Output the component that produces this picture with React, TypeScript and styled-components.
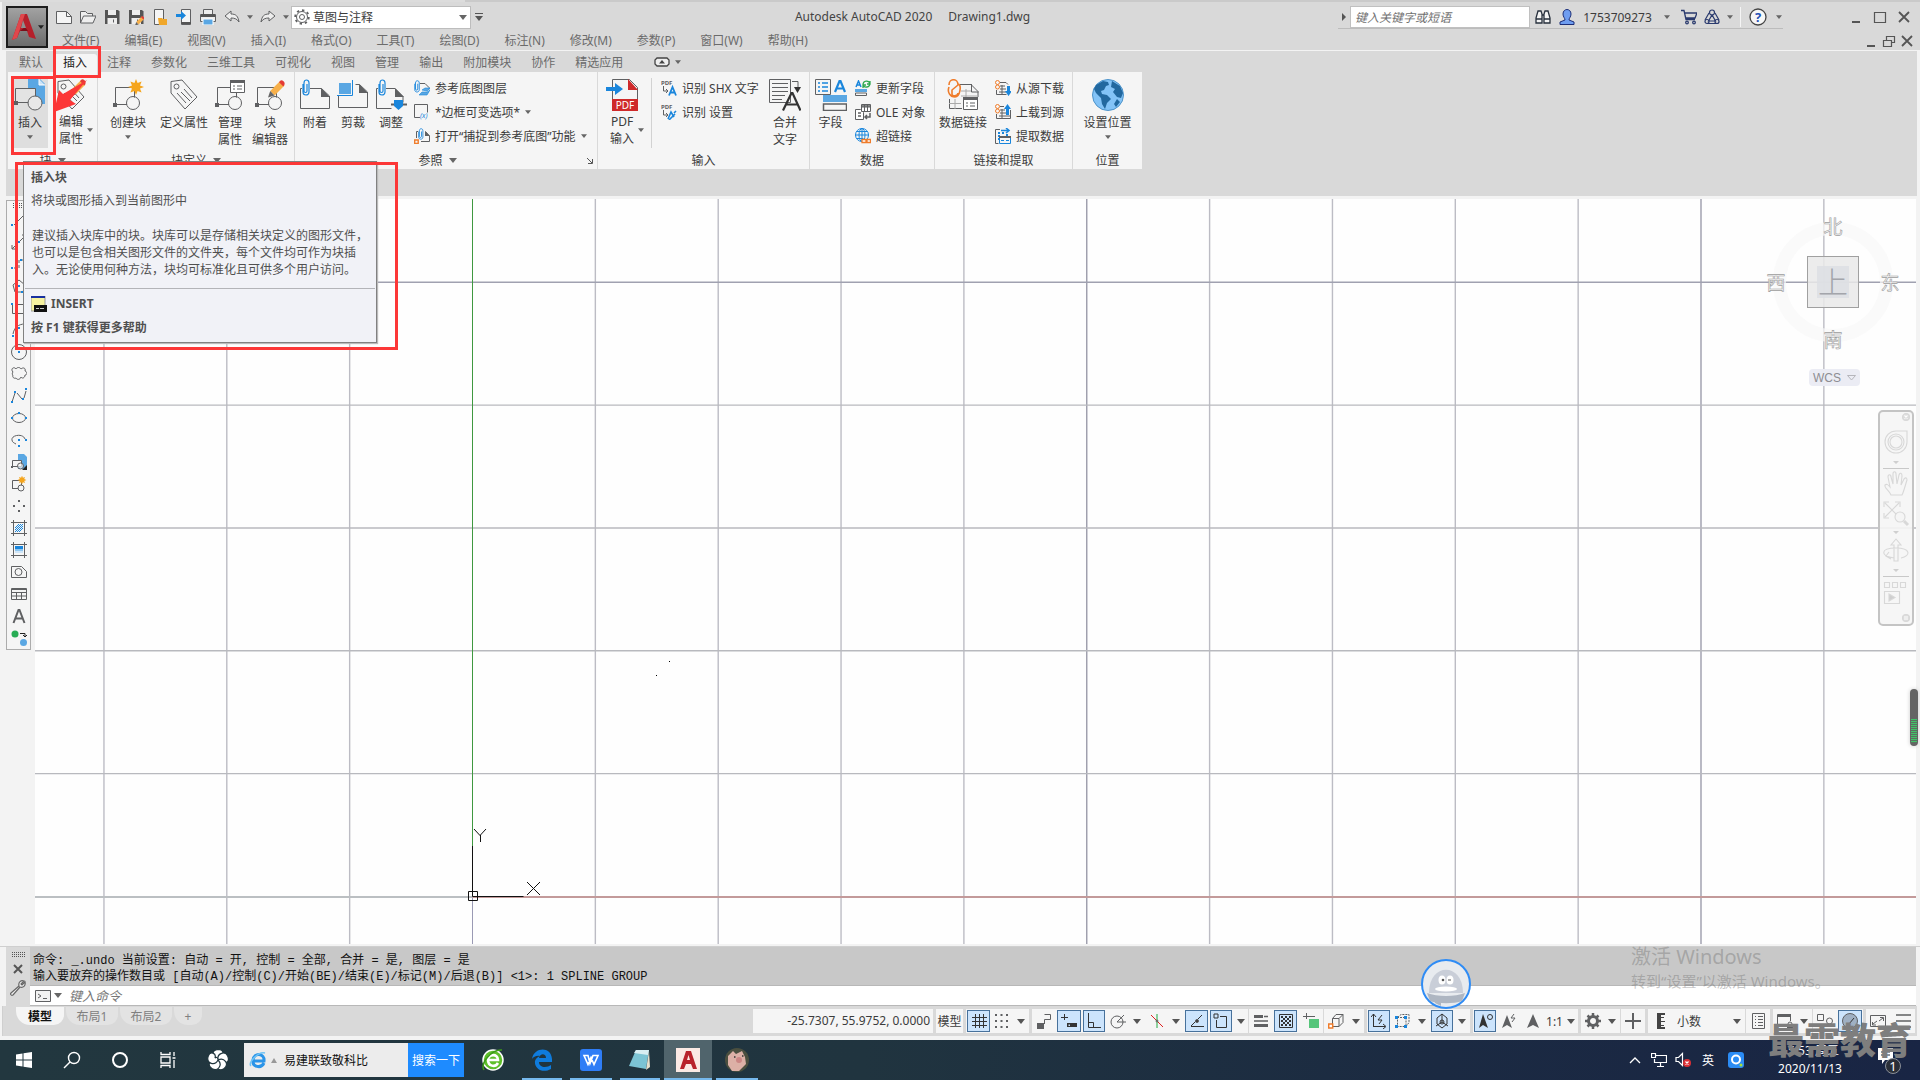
import React from "react";
import styled, { createGlobalStyle, css } from "styled-components";

/* ---------- theme values ---------- */
const chrome = "#d9d9d9";
const panel = "#f5f5f5";
const ink = "#3c3c3c";
const muted = "#6b6b6b";
const line = "#5f6062";
const blue = "#1a86dc";
const mark = "#fc3737";

const GlobalStyle = createGlobalStyle`
  *, *::before, *::after { box-sizing: border-box; }
  body { margin: 0; overflow: hidden; }
  body, button, input, select {
    font-family: "Noto Sans", "Noto Sans CJK SC", sans-serif;
    font-size: 12px;
    color: ${ink};
  }
  button, input, select { margin: 0; padding: 0; border: 0; background: none; outline: none; }
  svg { display: block; flex: none; }
`;

/* ---------- shell ---------- */
const Shell = styled.div`
  display: flex;
  flex-direction: column;
  height: 100vh;
  background: #f3f3f3;
  position: relative;
`;
const TopStrip = styled.div`
  height: 2px;
  flex: none;
  background: linear-gradient(90deg, #dcdcdc 465px, #cacaca 465px);
`;
const Header = styled.header`
  display: flex;
  flex: none;
  height: 48px;
  margin-left: 2px;
  padding: 0 4px;
  background: ${chrome};
`;
const AppButton = styled.button`
  width: 42px;
  height: 42px;
  margin-top: 4px;
  border: 2px solid #1c1c1c;
  background: linear-gradient(#a2a2a2, #6c6c6c);
  display: flex;
  align-items: center;
  justify-content: center;
`;
const HeaderRows = styled.div`
  flex: 1;
  display: flex;
  flex-direction: column;
`;
const TitleRow = styled.div`
  display: flex;
  align-items: flex-start;
  height: 30px;
  padding-top: 4px;
`;
const QuickBar = styled.div`
  display: flex;
  align-items: center;
  height: 22px;
  padding-left: 4px;
`;
const QuickButton = styled.button<{ $w?: number }>`
  width: ${(p) => p.$w ?? 24}px;
  height: 22px;
  display: flex;
  align-items: center;
  justify-content: center;
`;
const Workspace = styled.label`
  display: flex;
  align-items: center;
  width: 180px;
  height: 23px;
  margin-left: -1px;
  padding: 0 3px 0 2px;
  background: #fff;
  border: 1px solid #bdbdbd;
`;
const PlainSelect = styled.select`
  appearance: none;
  flex: 1;
  min-width: 0;
  padding-left: 3px;
`;
const Title = styled.h1`
  flex: 1;
  display: flex;
  justify-content: center;
  gap: 16px;
  margin: 0;
  font-size: 12px;
  line-height: 22px;
  font-weight: 400;
  color: #444;
`;
const InfoCenter = styled.div`
  display: flex;
  align-items: center;
  height: 23px;
  padding-left: 4px;
  border-bottom: 1px solid #bcbcbc;
`;
const SearchInput = styled.input`
  width: 180px;
  height: 22px;
  margin: 0 1px 0 4px;
  padding: 0 4px;
  background: #fff;
  border: 1px solid #c0c0c0;
  font-style: italic;
  &::placeholder { color: #707070; opacity: 1; }
`;
const Divider = styled.span`
  width: 1px;
  height: 20px;
  margin: 0 0 0 4px;
  background: #f5f5f5;
`;
const WindowControls = styled.div`
  display: flex;
  align-items: center;
  height: 22px;
  padding-left: 61px;
`;
const MenuRow = styled.nav`
  display: flex;
  align-items: center;
  height: 18px;
  padding-left: 13px;
`;
const MenuButton = styled.button`
  padding: 0 1px;
  margin-right: 23px;
  line-height: 18px;
  color: ${muted};
`;
const DocControls = styled.div`
  display: flex;
  margin-left: auto;
`;
const DocButton = styled.button`
  width: 18px;
  height: 18px;
  display: flex;
  align-items: center;
  justify-content: center;
`;

/* ---------- ribbon ---------- */
const Ribbon = styled.section`
  flex: none;
  margin: 1px 3px 0 6px;
  background: ${chrome};
  padding: 0 2px 27px;
`;
const TabRow = styled.div`
  display: flex;
  align-items: flex-end;
  height: 21px;
  padding-left: 1px;
`;
const Tab = styled.button<{ $on?: boolean }>`
  height: 18px;
  padding: 0 10px;
  line-height: 18px;
  color: ${(p) => (p.$on ? "#222" : muted)};
  background: ${(p) => (p.$on ? panel : "transparent")};
  border-radius: 3px 3px 0 0;
`;
const TabToggle = styled.button`
  display: flex;
  align-items: center;
  gap: 5px;
  height: 20px;
  padding-left: 21px;
`;
const Panels = styled.div`
  display: flex;
  height: 97px;
`;
const Panel = styled.section<{ $w: number }>`
  display: flex;
  flex-direction: column;
  width: ${(p) => p.$w}px;
  background: ${panel};
  & + & { border-left: 1px solid ${chrome}; }
`;
const PanelBody = styled.div<{ $pad?: number }>`
  display: flex;
  align-items: flex-start;
  flex: 1;
  padding: 6px 0 0 ${(p) => p.$pad ?? 0}px;
`;
const PanelTitle = styled.footer`
  display: flex;
  align-items: center;
  justify-content: center;
  gap: 6px;
  height: 18px;
`;
const Launcher = styled.button`
  margin-left: auto;
  padding-right: 4px;
`;
const PanelName = styled.span`
  display: flex;
  align-items: center;
  gap: 6px;
  margin-left: auto;
`;
const BigButton = styled.button<{ $w: number; $hot?: boolean; $left?: boolean; $after?: number }>`
  display: flex;
  flex-direction: column;
  align-items: ${(p) => (p.$left ? "flex-start" : "center")};
  width: ${(p) => p.$w}px;
  height: 70px;
  margin-right: ${(p) => p.$after ?? 0}px;
  padding-top: 1px;
  line-height: 17px;
  white-space: nowrap;
  background: ${(p) => (p.$hot ? "#dedede" : "transparent")};
  & > svg:last-child:not(:first-child) { margin-top: 4px; }
`;
const BigLabel = styled.span`
  display: flex;
  align-items: center;
  gap: 4px;
  padding: 0 4px;
  margin: 3px -8px 0;
  white-space: pre;
  text-align: center;
`;
const SideLabel = styled(BigLabel)`
  margin: 2px 0 0;
`;
const SmallColumn = styled.div<{ $w?: number }>`
  display: flex;
  flex-direction: column;
  padding-left: 4px;
  width: ${(p) => (p.$w ? p.$w + "px" : "auto")};
`;
const SmallButton = styled.button`
  display: flex;
  align-items: center;
  gap: 5px;
  height: 24px;
  padding-bottom: 4px;
  white-space: nowrap;
`;
const PanelRule = styled.span`
  width: 1px;
  height: 70px;
  margin: 0 5px 0 3px;
  background: #d2d2d2;
`;

/* ---------- drawing area ---------- */
const Work = styled.main`
  flex: 1;
  min-height: 0;
  display: flex;
  padding: 3px 4px 2px 6px;
  border-bottom: 1px solid #cfcfcf;
`;
const ToolPalette = styled.div`
  display: flex;
  flex-direction: column;
  align-items: center;
  align-self: flex-start;
  width: 25px;
  margin: 1px 4px 0 0;
  padding-top: 2px;
  border: 1px solid #acacac;
  background: ${panel};
`;
const ToolButton = styled.button`
  width: 22px;
  height: 22px;
  display: flex;
  align-items: center;
  justify-content: center;
`;
const Grip = styled.span`
  width: 14px;
  height: 6px;
  background: conic-gradient(from 90deg at 1px 1px, transparent 270deg, #555 0) 0 0 / 2px 2px;
`;
const Canvas = styled.div`
  position: relative;
  flex: 1;
  overflow: hidden;
  background: #fefefe;
`;
const Drawing = styled.svg`
  position: absolute;
  left: 0;
  top: 0;
`;
const Compass = styled.div`
  position: absolute;
  top: 12px;
  right: 14px;
  width: 138px;
  height: 180px;
`;
const WcsButton = styled.button`
  position: absolute;
  left: 45px;
  top: 158px;
  display: flex;
  align-items: center;
  gap: 6px;
  height: 17px;
  padding: 0 4px;
  border-radius: 4px;
  background: #ebecf4;
  color: #8d8d92;
  font-family: "Liberation Sans", sans-serif;
`;
const NavBar = styled.div`
  position: absolute;
  top: 211px;
  right: 2px;
  width: 36px;
  height: 216px;
  border: 2px solid #c4c4c4;
  border-radius: 5px;
  background: rgba(245, 245, 245, 0.9);
`;
const Gauge = styled.div`
  position: absolute;
  top: 689px;
  right: 2px;
  width: 8px;
  height: 57px;
  padding: 30px 1px 3px;
  border-radius: 4px;
  background: #646464;
  box-shadow: 0 0 4px #ccc;
  &::before {
    content: "";
    display: block;
    height: 24px;
    background: repeating-linear-gradient(#41c368 0 1px, #5a6f60 1px 2px);
  }
`;

/* ---------- command line ---------- */
const Command = styled.section`
  flex: none;
  display: flex;
  margin: 0 4px 0 6px;
  background: ${chrome};
`;
const CommandTools = styled.div`
  display: flex;
  flex-direction: column;
  align-items: center;
  width: 24px;
  padding-top: 5px;
  gap: 6px;
`;
const CommandBody = styled.div`
  flex: 1;
`;
const History = styled.pre`
  margin: 0;
  height: 38px;
  padding: 6px 3px 0;
  line-height: 16px;
  font-family: "Liberation Mono", "Noto Sans CJK SC", monospace;
  font-size: 12px;
  color: #111;
  background: #c8c8c8;
`;
const Prompt = styled.label`
  display: flex;
  align-items: center;
  gap: 3px;
  height: 21px;
  padding-left: 5px;
  background: #fff;
  border-top: 1px solid #b8b8b8;
  border-bottom: 1px solid #b8b8b8;
`;
const PromptInput = styled.input`
  flex: 1;
  padding-left: 4px;
  font-size: 13px;
  font-style: italic;
  &::placeholder { color: #777; opacity: 1; }
`;

/* ---------- layout tabs and status ---------- */
const Bottom = styled.footer`
  flex: none;
  display: flex;
  height: 30px;
  margin: 0 3px 0 2px;
  padding: 1px 2px 0 10px;
  background: ${chrome};
  border-left: 1px solid #cfcfcf;
`;
const LayoutTabs = styled.div`
  display: flex;
  padding-left: 3px;
`;
const LayoutTab = styled.button<{ $on?: boolean; $w?: number }>`
  width: ${(p) => p.$w ?? 48}px;
  height: 18px;
  margin-right: 2px;
  line-height: 17px;
  border-radius: 0 0 10px 14px;
  background: ${(p) => (p.$on ? panel : "#e3e3e3")};
  color: ${(p) => (p.$on ? "#111" : "#808080")};
  font-weight: ${(p) => (p.$on ? 700 : 400)};
`;
const Status = styled.div`
  display: flex;
  gap: 3px;
  height: 24px;
  margin: 2px 0 0 auto;
`;
const StatusGroup = styled.div`
  display: flex;
  align-items: center;
  background: ${panel};
`;
const StatusButton = styled.button<{ $w: number; $on?: boolean; $sep?: boolean }>`
  display: flex;
  align-items: center;
  justify-content: center;
  width: ${(p) => (p.$on ? p.$w - 2 : p.$w)}px;
  height: ${(p) => (p.$on ? 22 : 24)}px;
  margin: ${(p) => (p.$on ? "0 1px" : "0")};
  white-space: nowrap;
  ${(p) => p.$on && css`background: #cce4fc; border: 1px solid #47719b;`}
  ${(p) => p.$sep && css`border-left: 1px solid ${chrome};`}
`;
const Coordinates = styled.output`
  width: 180px;
  padding-right: 3px;
  text-align: right;
  line-height: 24px;
`;
const UnitSelect = styled.label`
  display: flex;
  align-items: center;
  width: 73px;
  padding: 0 4px 0 2px;
`;

/* ---------- taskbar ---------- */
const Taskbar = styled.footer`
  flex: none;
  display: flex;
  align-items: center;
  height: 40px;
  margin-top: 4px;
  color: #fff;
  background: linear-gradient(90deg, #22373f 0, #20343f 45%, #1b2a42 75%, #192544 100%);
`;
const TaskButton = styled.button<{ $w: number; $run?: boolean; $on?: boolean }>`
  position: relative;
  display: flex;
  align-items: center;
  justify-content: center;
  width: ${(p) => p.$w}px;
  height: 40px;
  color: #fff;
  background: ${(p) => (p.$on ? "#50646c" : "transparent")};
  ${(p) => p.$run && css`
    &::after {
      content: "";
      position: absolute;
      left: ${p.$on ? 0 : 4}px;
      right: ${p.$on ? 0 : 4}px;
      bottom: 0;
      height: 2px;
      background: #76b9ed;
    }
  `}
`;
const WebSearch = styled.form`
  display: flex;
  height: 34px;
  width: 220px;
  margin-right: 4px;
`;
const WebLabel = styled.label`
  display: flex;
  align-items: center;
  flex: 1;
  gap: 4px;
  padding-left: 5px;
  background: #ececec;
`;
const WebInput = styled.input`
  width: 110px;
  padding-left: 3px;
  color: #111;
`;
const WebButton = styled.button`
  width: 56px;
  background: #1e8bff;
  color: #fff;
`;
const Tray = styled.div`
  display: flex;
  align-items: center;
  margin-left: auto;
`;
const Clock = styled.time`
  width: 88px;
  margin-left: 16px;
  text-align: center;
  line-height: 18px;
  white-space: pre-line;
`;

/* ---------- floating layers ---------- */
const Tooltip = styled.aside`
  position: absolute;
  left: 23px;
  top: 161px;
  width: 354px;
  height: 182px;
  display: flex;
  flex-direction: column;
  border: 1px solid #818181;
  background: #f1f2f7;
  padding: 7px 1px 0;
  color: #505050;
  box-shadow: 1px 1px 1px #bbb;
  line-height: 17px;
`;
const TipTitle = styled.h2`
  margin: 0 0 6px;
  padding: 0 6px;
  font-size: 12px;
  font-weight: 700;
`;
const TipLead = styled.p`
  margin: 0 0 18px;
  padding: 0 6px;
`;
const TipBody = styled.p`
  margin: 0 0 10px;
  padding: 0 7px;
`;
const TipCommand = styled.p`
  display: flex;
  align-items: center;
  gap: 4px;
  margin: 0 0 7px;
  padding: 6px 6px 0;
  border-top: 1px solid #b3b4b8;
  font-weight: 700;
`;
const Frame = styled.div<{ $x: number; $y: number; $w: number; $h: number }>`
  position: absolute;
  left: ${(p) => p.$x}px;
  top: ${(p) => p.$y}px;
  width: ${(p) => p.$w}px;
  height: ${(p) => p.$h}px;
  border: 3px solid ${mark};
  pointer-events: none;
`;
const Pointer = styled.svg`
  position: absolute;
  left: 53px;
  top: 78px;
`;
const Mascot = styled.svg`
  position: absolute;
  right: 449px;
  bottom: 71px;
`;
const Activation = styled.div`
  position: absolute;
  left: calc(100% - 289px);
  bottom: 88px;
  color: rgba(110, 110, 110, 0.4);
  font-size: 15px;
  line-height: 22px;
  white-space: nowrap;
  pointer-events: none;
`;
const ActivationTitle = styled.div`
  font-size: 20px;
  line-height: 27px;
`;
const Watermark = styled.div`
  position: absolute;
  right: 8px;
  bottom: 24px;
  font-family: "Noto Sans CJK SC", sans-serif;
  font-size: 36px;
  line-height: 36px;
  font-weight: 900;
  color: #7e7e7e;
  pointer-events: none;
`;

/* ---------- icons ---------- */
type IconProps = { s?: number; w?: number; h?: number; children: React.ReactNode; c?: string; sw?: number };
const Ic = ({ s = 16, w, h, children, c = line, sw = 1 }: IconProps) => (
  <svg width={w ?? s} height={h ?? s} viewBox={`0 0 ${w ?? s} ${h ?? s}`} fill="none" stroke={c} strokeWidth={sw}>
    {children}
  </svg>
);
const Caret = ({ c = "#666", big = false }: { c?: string; big?: boolean }) => (
  <svg width={big ? 8 : 6} height={big ? 5 : 4} viewBox="0 0 8 5"><path d="M0 0h8L4 5z" fill={c} /></svg>
);
const Clip = ({ x = 0, y = 0, k = 1 }: { x?: number; y?: number; k?: number }) => (
  <g transform={`translate(${x} ${y}) scale(${k})`}>
    <path d="M0 0h8v17H0z" fill={panel} stroke="none" />
    <path d="M1 5v8c0 4 6 4 6 0V4c0-4-5-4-5 0v8c0 2 3 2 3 0V5" stroke={blue} strokeWidth="1.200" />
  </g>
);
const Sun = ({ x, y, k = 1 }: { x: number; y: number; k?: number }) => (
  <path transform={`translate(${x} ${y}) scale(${k})`} stroke="none" fill="#f5a51d" d="M0-8 1.6-4 5.6-5.6 4-1.6 8 0 4 1.6 5.6 5.6 1.6 4 0 8-1.6 4-5.6 5.6-4 1.6-8 0-4-1.6-5.6-5.6-1.6-4z" />
);
const Pencil = ({ x, y, k = 1 }: { x: number; y: number; k?: number }) => (
  <g transform={`translate(${x} ${y}) scale(${k})`} stroke="none">
    <path d="M11 1l4 4L6 14 2 10z" fill="#f7b04a" /><path d="M11 1c1-2 5 1 4 3l-1 2-4-4z" fill="#e43b35" /><path d="M2 10l4 4-6 2z" fill="#666" />
  </g>
);
const BlockShape = () => (<><path d="M3.500 25.500v-17h19v10M3 25.500h12" /><circle cx="21" cy="24" r="6.500" /><path d="M1 24h4v4H1z" fill={line} stroke="none" /></>);
const Tag = () => (<><path d="M3 2.500 14 1l15 17-12 12L3 14z" /><circle cx="8.500" cy="7.500" r="2.500" /><path d="M9 14l9 10M13 13l9 9M16 10l8 9" /></>);
const List = ({ x, y, w = 14, h = 12 }: { x: number; y: number; w?: number; h?: number }) => (
  <g transform={`translate(${x} ${y})`}><path d={`M.5.5h${w}v${h}H.5z`} fill="#fff" /><path d={`M0 0h${w + 1}v3H0z`} fill={line} stroke="none" /><path d={`M3 6h2M7 6h${w - 9}M3 9h2M7 9h${w - 9}`} /></g>
);
const RefPage = () => (<><path d="M7 9.500H1.500v20h29V17l-8-7.500H10" /><path d="M22 9l9 9h-9z" fill={line} stroke="none" /></>);

const big = {
  insert: <Ic s={32}><path d="M14 0h12l5 5v20H14z" fill="#5aa7e3" stroke="none" /><path d="M25 0v6h6" stroke="#fff" fill="#cfe5f7" /><path d="M1.500 9.500h20v14h-20z" fill="#e3e3e3" /><circle cx="21" cy="24" r="7" fill="#e8e8e8" /><path d="M0 22h4v4H0z" fill={line} stroke="none" /></Ic>,
  editAttr: <Ic s={32}><Tag /><Pencil x={14} y={0} k={1.1} /></Ic>,
  create: <Ic s={32}><BlockShape /><Sun x={24} y={8} /></Ic>,
  define: <Ic s={32}><Tag /></Ic>,
  manage: <Ic s={32}><BlockShape /><List x={16} y={1} /></Ic>,
  editor: <Ic s={32}><BlockShape /><Pencil x={14} y={1} k={1.1} /></Ic>,
  attach: <Ic s={32}><RefPage /><Clip x={3} /></Ic>,
  clip: <Ic s={32}><path d="M1.500 17v11.500h29V13l-8-7.500h-4" /><path d="M22 5l9 9h-9z" fill={line} stroke="none" /><path d="M2 4h12v11H2z" fill="#5aa7e3" stroke="none" /><path d="M0 16.500h15.500V1" stroke={blue} /></Ic>,
  adjust: <Ic s={32}><path d="M7 9.500H1.500v20h15M10 9.500h10l8 8v6" /><path d="M20 9l9 9h-9z" fill={line} stroke="none" /><Clip x={3} /><path d="M16 25.500h16" strokeWidth="2" /><path d="M19 21h9v6l-4.500 4L19 27z" fill={blue} stroke="none" /></Ic>,
  pdf: <Ic s={32}><path d="M6.500 20V.5h17l8 8V20" /><path d="M22 0l10 11H22z" fill="#cf2a2a" stroke="none" /><path d="M6 20h26v12H6z" fill="#cf2a2a" stroke="none" /><path d="M0 8h9V4l8 6-8 6v-4H0z" fill={blue} stroke="none" /><text x="19" y="30" textAnchor="middle" fontSize="10" fill="#fff" stroke="none">PDF</text></Ic>,
  merge: <Ic s={32}><path d="M.5.5h21v23H.5zM3 4.500h16M3 8.500h16M3 12.500h16M3 16.500h13M3 20.500h10M23 2.500h6V9" /><path d="M25 8h7l-3.500 6z" fill="#333" stroke="none" /><path d="M14 31.500 22.500 14h1L31.500 31.500M17 25.500h12" stroke="#333" strokeWidth="2.200" /></Ic>,
  field: <Ic s={32}><path d="M.5.5h15v15H.5z" /><path d="M3 4h2M3 8h2M3 12h2M7 4h6M7 8h6M7 12h6" stroke={blue} strokeWidth="1.500" /><path d="M20 13 24.500 2h1L30 13M21.500 9.500h7" stroke={blue} strokeWidth="2.200" /><path d="M8 16h24v7H8z" fill="#5aa7e3" stroke="none" /><path d="M8.500 25h23v6.500h-23z" strokeWidth="1.500" /></Ic>,
  datalink: <Ic s={32}><path d="M13 5.500h11l7 7V18M2.500 20v9.500H15M24.500 5v8h7" /><path d="M2 24.500h12M8 20v10M14 12h10M14 17h17M19 10v8" stroke="#aaa" /><List x={16} y={18} /><path d="M2 6c0-7 9-7 9 0l-6 5v4c0 3 6 2 6-1M11 5c4 1 2 13-3 13S0 13 2 8" stroke="#ef7c2b" strokeWidth="1.600" /></Ic>,
  globe: <Ic s={32}><circle cx="16" cy="16" r="15.500" fill="#83c3f7" stroke="#4e93c9" /><path d="M4 6l7-4 5 1 1 3-3 1-2 4-3 1 1 3 5 1 4 4-4 4-2 6-3-5-1-6-5-5-2-4zM20 2l8 5 3 7-2 5-4-1-4-5 2-3-4-2z M25 20l3 3-4 5-2-3z" fill="#22689f" stroke="none" /></Ic>,
};

const small = {
  layers: <Ic><path d="M6 3.500h5l4 4v2" /><Clip x={0} y={0} k={0.75} /><path d="M8 10l3-2h5l-3 3zM5 15l3-3h5l3-2-3 5z" fill="#5aa7e3" stroke={blue} strokeWidth="0.600" /></Ic>,
  frame: <Ic><path d="M.5.5h13v8M.5.5v13H6" /><text x="6" y="14" fontSize="7" fill={blue} stroke="none" fontStyle="italic">(x)</text></Ic>,
  snap: <Ic><path d="M5 3.500H2.500V10M7 13.500h8.500V8l-4-4.500" /><path d="M11 3l5 5h-5z" fill={line} stroke="none" /><Clip x={4} y={0} k={0.7} /><path d="M.7 12h3.500v3.500H.7z" stroke="#ef7c2b" strokeWidth="1.400" /></Ic>,
  shx: <Ic><text x="0" y="5" fontSize="6" fontWeight="700" fill={line} stroke="none">PDF</text><path d="M2.500 6v5H6M5 9l2 2-2 2" /><path d="M8 15.500 11.500 7 15 15.500M9 12.500h5" stroke={blue} strokeWidth="1.800" /></Ic>,
  shxSet: <Ic><text x="0" y="5" fontSize="6" fontWeight="700" fill={line} stroke="none">PDF</text><path d="M2.500 6v5H6M5 9l2 2-2 2" /><path d="M7 15 10 8l3 5M15 7l-2 2M8 16l6-6" stroke={blue} strokeWidth="1.600" /></Ic>,
  update: <Ic><path d="M1 7 3.500 1 6 7M2 5h3" stroke={blue} strokeWidth="1.500" /><path d="M8 5c0-5 6-5 7-1M15 3c0 5-6 5-7 2M15 1v3h-3M8 8V5h3" stroke="#2fa84f" strokeWidth="1.300" /><path d="M0 9h12v3H0z" fill="#5aa7e3" stroke="none" /><path d="M.5 13h11v2.500H.5z" /></Ic>,
  ole: <Ic><path d="M6.500.5h9v7h-9zM6 3h9M9.500 1v6M12.500 1v6M.5 5.500h5l3 3V15.500h-8z" fill="#fff" /><path d="M6 2h10M3 9h3M3 12h3M15 9v4h-4M12 11l-2 2 2 2" strokeWidth="1.500" /></Ic>,
  link: <Ic><circle cx="7" cy="7" r="6.500" stroke={blue} /><ellipse cx="7" cy="7" rx="3" ry="6.500" stroke={blue} /><path d="M0 7h14M1.500 3.500h11M1.500 10.500h7M7 0v14" stroke={blue} /><path d="M7 11.500h4v3H7zM12 11.500h3.500v3H12z" fill="#fff" stroke="#ef7c2b" strokeWidth="1.300" /></Ic>,
  down: <Ic><circle cx="2.500" cy="2.500" r="2" stroke="#ef7c2b" /><circle cx="2.500" cy="7" r="2" stroke="#ef7c2b" /><path d="M5 2.500h6l2 2M1.500 10v4.500h10M5 6h5M5 9h6M4 12h7M7 5v9" /><path d="M12 6h3v5h2l-3.500 5L10 11h2z" fill={blue} stroke="none" /></Ic>,
  up: <Ic><circle cx="2.500" cy="2.500" r="2" stroke="#ef7c2b" /><circle cx="2.500" cy="7" r="2" stroke="#ef7c2b" /><path d="M5 2.500h4M1.500 10v4.500h14V6M5 6h5M5 9h6M4 12h11M7 5v9" /><path d="M11 11V5H9l3.500-5L16 5h-2v6z" fill={blue} stroke="none" /></Ic>,
  extract: <Ic><path d="M5 1.500H.5v14h3" /><path d="M3 5h2M3 8h2M3 11h1M7 5h2M11 7h2" stroke={blue} strokeWidth="2" /><path d="M6 2.500h7M11 0l3 2.500L11 5" stroke={blue} strokeWidth="1.600" /><path d="M4.500 8.500h11v7h-11zM6 12.500h3M11 12.500h3" stroke={blue} /><path d="M4 8h12v2H4z" fill={line} stroke="none" /></Ic>,
};

const A = ({ s = 26 }: { s?: number }) => (
  <svg width={s} height={s} viewBox="0 0 26 28"><path d="M1 27 10 1h6l9 25-7-2-2-6H9l-3 7z" fill="#b5202b" /><path d="M10 1h4L6 25l-5 2z" fill="#e0474c" /><path d="M9 18l5-4 3 4z" fill="#7c0f19" /><path d="M12 7l3 8h-5z" fill="#8f8f8f" /></svg>
);
const Floppy = () => (<><path d="M1 1h13l1.500 1.500V15H1z" fill="#555" stroke="none" /><path d="M4 1h8v5H4zM3.500 9h9.500v6H3.500z" fill="#eee" stroke="none" /><path d="M9.500 10.500v3" /></>);
const quick: [string, React.ReactNode][] = [
  ["新建", <Ic><path d="M.5 2.500h10l5 5v7H.5z" fill="#f5f5f5" /><path d="M10.500 2.500v5h5" /></Ic>],
  ["打开", <Ic><path d="M.5 14V2.500h5l2 2h5V7M.5 14l3-7H16l-3 7z" fill="#eee" /></Ic>],
  ["保存", <Ic><Floppy /></Ic>],
  ["另存为", <Ic><Floppy /><Pencil x={7} y={7} k={0.6} /></Ic>],
  ["从移动设备打开", <Ic><path d="M2.500.5h9v15h-9z" fill="#f5f5f5" /><path d="M6 9h4l1 1h4v6H7z" fill="#f0a72a" stroke="none" /></Ic>],
  ["保存到移动设备", <Ic><path d="M5.500.5h9v15h-9z" fill="#f5f5f5" /><path d="M5 13h10v2H5z" fill="#555" stroke="none" /><path d="M0 5h5V2l5 4.500L5 11V8H0z" fill={blue} stroke="none" /></Ic>],
  ["打印", <Ic><path d="M3.500 5V.5h9V5M.5 5.500h15v7H.5z" fill="#eee" /><path d="M1 5h14v3H1z" fill="#555" stroke="none" /><path d="M3 10h10v6H3z" fill="#5aa7e3" stroke="#fff" /></Ic>],
];
const undoPath = "M1 7 7 2v3c5 0 7 2 8 8-2-3-4-4-8-4v3z";

const tools: [string, React.ReactNode][] = [
  ["直线", <><path d="M3 13 14 2" /><path d="M0 12h2v2H0zM14 1h2v2h-2z" fill={blue} stroke="none" /></>],
  ["构造线", <><path d="M1 15 15 1M1 11v4h4M11 1h4v4" /><path d="M7 7h2v2H7z" fill={blue} stroke="none" /></>],
  ["多段线", <><path d="M3 12h5V4h5" strokeDasharray="3 2" /><path d="M0 11h2v2H0zM9 3h2v2H9zM14 11h2v2h-2z" fill={blue} stroke="none" /></>],
  ["多边形", <><path d="M8 2 2 7l2 7h8l2-7z" /><path d="M7 7h2v2H7zM10 13h2v2h-2z" fill={blue} stroke="none" /></>],
  ["矩形", <><path d="M1.500 5v8.500h13v-9H4" /><path d="M0 3h2v2H0z" fill={blue} stroke="none" /></>],
  ["圆弧", <><path d="M2 12C3 6 7 2 14 2" /><path d="M1 13h2v2H1zM7 5h2v2H7z" fill={blue} stroke="none" /></>],
  ["圆", <><circle cx="8" cy="8" r="7.500" /><path d="M7 7h2v2H7z" fill={blue} stroke="none" /></>],
  ["修订云线", <path d="M2 6C-1 3 3 0 5 3c1-2 4-2 5 0 2-2 5-1 4 2 3 1 2 4 0 4 0 3-3 4-4 2-1 3-4 3-5 1-2 1-4-1-3-3C1 9 1 7 2 6z" />],
  ["样条曲线", <><path d="M1 14 4 5M6 5l5 6M13 10l2-7" /><path d="M0 13h2v2H0zM3 3h2v2H3zM11 10h2v2h-2zM14 0h2v2h-2z" fill={blue} stroke="none" /></>],
  ["椭圆", <><ellipse cx="8" cy="8" rx="6.500" ry="4.500" /><path d="M7 2h2v2H7zM0 7h2v2H0zM14 7h2v2h-2z" fill={blue} stroke="none" /></>],
  ["椭圆弧", <><path d="M14 7C12 1 0 3 1 8c0 2 2 3 4 4" /><path d="M7 7h2v2H7zM14 7h2v2h-2zM7 13h2v2H7z" fill={blue} stroke="none" /></>],
  ["插入块", <><path d="M7 0h6l3 3v12H7z" fill="#5aa7e3" stroke="none" /><path d="M1.500 6.500h9v6h-9z" fill={panel} /><circle cx="9.500" cy="12" r="3" fill={panel} fillOpacity="0.700" /><path d="M0 12h2v2H0z" fill={line} stroke="none" /><path d="M16 11v5h-5z" fill="#222" stroke="none" /></>],
  ["创建块", <><path d="M1.500 13V4.500h9V9M1 12.500h6" /><circle cx="10" cy="12" r="3" /><Sun x={11} y={4} k={0.55} /></>],
  ["点", <path d="M7 2h2v2H7zM2 7h2v2H2zM12 7h2v2h-2zM7 12h2v2H7z" fill={line} stroke="none" />],
  ["图案填充", <><path d="M2.500 0v16M13.500 0v16M0 2.500h16M0 13.500h16" /><path d="M4 8l4-4M4 12l8-8M8 12l4-4M4 10l6-6M6 12l6-6" stroke={blue} /></>],
  ["渐变色", <><path d="M2.500 0v16M13.500 0v16M0 2.500h16M0 13.500h16" /><path d="M4 4h8v3H4z" fill={blue} stroke="none" /><path d="M4 7h8v2H4z" fill="#8ec5ef" stroke="none" /><path d="M4 9h8v2H4z" fill="#cfe5f7" stroke="none" /></>],
  ["面域", <><path d="M.5 2.500h10l5 5v6H.5z" /><circle cx="7.500" cy="8" r="3.500" /></>],
  ["表格", <path d="M.5 2.500h15v11H.5zM0 3.500h16M0 6.500h16M0 10h16M5.500 6v8M10.500 6v8" />],
  ["多行文字", <path d="M2.500 15 7.500 2h1l5 13M4.500 10.500h7" strokeWidth="2" />],
  ["添加选定对象", <><circle cx="4" cy="4" r="3.500" fill="#27ac54" stroke="none" /><path d="M9 3.500h5V7M12 5l2 2 2-2" stroke="#222" /><circle cx="12.500" cy="12.500" r="3.500" fill="#5aa7e3" stroke="none" /></>],
];

type Cell = { n: string; w: number; on?: boolean; sep?: boolean; i?: React.ReactNode; t?: string };
const caretCell = (n: string, w = 16): Cell => ({ n: n + "选项", w, i: "caret" });
const groups1: Cell[][] = [
  [{ n: "模型空间", w: 27, t: "模型" }],
  [{ n: "栅格", w: 25, on: true, i: <path d="M4.500 1v14M8.500 1v14M12.500 1v14M1 4.500h15M1 8.500h15M1 12.500h15" stroke="#333" /> }, { n: "捕捉", w: 22, i: <path d="M1 2h2M6.500 2h2M12 2h2M1 8h2M6.500 8h2M12 8h2M1 14h2M6.500 14h2M12 14h2" strokeWidth="2" /> }, caretCell("捕捉")],
  [
    { n: "推断约束", w: 24, i: <><path d="M8.500 1.500h6v5h-6V11" /><path d="M1 10h7v6H1z" fill={line} stroke="none" /></> },
    { n: "动态输入", w: 26, on: true, i: <><path d="M3.500 1v6M0 4.500h7" stroke="#333" /><path d="M6 10h10v4H6z" fill="#333" stroke="none" /><path d="M7.500 11.500h1.500v1.500H7.500z" fill="#cce4fc" stroke="none" /></> },
    { n: "正交", w: 24, on: true, i: <path d="M2.500 0v14.500H15M2.500 9.500h5v5" stroke="#333" /> },
    { n: "极轴追踪", w: 23, i: <><circle cx="7" cy="9" r="6" /><path d="M7 9l7-7M7 9h9" /></> }, caretCell("极轴追踪"),
    { n: "等轴测草图", w: 23, i: <><path d="M2 2l12 12" stroke="#d22" /><path d="M8 1v14" stroke="#2a4" /><circle cx="8" cy="8" r="1" /></> }, caretCell("等轴测"),
    { n: "对象捕捉追踪", w: 25, on: true, i: <><path d="M2 13.500h13M2 13 13 2" stroke="#333" /><circle cx="8" cy="8" r="1.500" fill="#333" /></> },
    { n: "对象捕捉", w: 24, on: true, i: <path d="M1 1h4v4H1zM7 3.500h6.500v11H3.500V7" stroke="#333" /> }, caretCell("对象捕捉", 15),
    { n: "线宽", w: 25, sep: true, i: <><path d="M1 3.500h9M1 12.500h14" strokeWidth="3" /><path d="M1 8h14M11 3.500h4" strokeWidth="1.500" /></> },
    { n: "透明度", w: 25, on: true, i: <><path d="M1.500 1.500h13v13h-13z" stroke="#333" /><path d="M3 3h2v2H3zM7 3h2v2H7zM11 3h2v2h-2zM5 5h2v2H5zM9 5h2v2H9zM3 7h2v2H3zM7 7h2v2H7zM11 7h2v2h-2zM5 9h2v2H5zM9 9h2v2H9zM3 11h2v2H3zM7 11h2v2H7zM11 11h2v2h-2z" fill="#333" stroke="none" /></> },
    { n: "选择循环", w: 25, i: <><path d="M3.500 0v6M0 3.500h12" /><path d="M6 6h10v9H6z" fill="#55c57a" stroke="none" /></> },
    { n: "三维对象捕捉", w: 25, sep: true, i: <><path d="M4.500 5.500 8 1.500h7v8l-4 4H4.500zM4.500 5.500H11v8M11 5.500l4-4" /><path d="M.7 11h4v4h-4z" stroke="#ef7c2b" strokeWidth="1.500" fill="#fff" /></> }, caretCell("三维捕捉"),
  ],
  [
    { n: "动态 UCS", w: 24, on: true, i: <path d="M2.500 14V1M0 4l2.500-3L5 4M2 13.500h12M12 11l3 2.500-3 2.500M11 2 7 7h4l-3 4" stroke="#333" /> },
    { n: "选择过滤", w: 23, i: <><path d="M2.500 4.500 6 1.500h8v8l-3 4H2.500zM2 4.500h9v9" strokeDasharray="2 1" /><path d="M0 3h3v3H0zM9 3h3v3H9zM0 12h3v3H0zM9 12h3v3H9z" fill={blue} stroke="none" /></> }, caretCell("选择过滤"),
    { n: "小控件", w: 24, on: true, i: <><path d="M8 1 3 5v6l5 4 5-4V5zM8 1v8M8 9l-6 4M8 9l6 4" stroke="#333" /><circle cx="8" cy="9" r="2" stroke="#333" /></> }, caretCell("小控件"),
  ],
  [
    { n: "注释可见性", w: 24, on: true, i: <><path d="M6 1 2 15l4-3 5 3z" fill="#333" stroke="none" /><circle cx="13" cy="4" r="2.500" stroke="#333" /></> },
    { n: "自动缩放", w: 24, i: <><path d="M6 2 1 15l5-3 5 3z" fill={line} stroke="none" /><path d="M13 1l-3 4h4l-3 4" /></> },
    { n: "注释缩放", w: 24, i: <path d="M8 1 2 15l6-3 6 3z" fill={line} stroke="none" /> },
    { n: "注释比例", w: 19, t: "1:1" }, caretCell("注释比例", 14),
  ],
  [
    { n: "切换工作空间", w: 23, i: <><circle cx="8" cy="8" r="4.500" strokeWidth="3" /><path d="M8 0v3M8 13v3M0 8h3M13 8h3M2.500 2.500l2 2M11.500 11.500l2 2M2.500 13.500l2-2M11.500 4.500l2-2" strokeWidth="2.500" /></> }, caretCell("工作空间"),
    { n: "注释监视器", w: 25, sep: true, i: <path d="M8 0v16M0 8h16" strokeWidth="2" /> },
  ],
];
const groups2: Cell[][] = [
  [
    { n: "锁定界面", w: 23, i: <><path d="M9 12.500H.5v-11h13V8" /><path d="M1 1h13v3H1z" fill={line} stroke="none" /><path d="M10 12h6v4h-6z" fill={line} stroke="none" /><circle cx="13" cy="11" r="2" /></> }, caretCell("锁定"),
    { n: "隔离对象", w: 25, sep: true, i: <><path d="M.5 1.500h6v6h-6z" /><circle cx="12.500" cy="8" r="3" /><path d="M6 11l2 3 2-3" /></> },
    { n: "图形性能", w: 26, on: true, i: <><circle cx="8" cy="8" r="7.500" fill="#9fb0c3" /><path d="M7 11l5-6" stroke="#333" /></> },
  ],
  [
    { n: "全屏显示", w: 24, i: <path d="M.5 2.500h15v11H.5zM9 8l4-3M10 4.500h3.500V8M7 8l-4 3M2.500 9v3H6" /> },
    { n: "自定义", w: 25, i: <path d="M1 2h15M1 8h15M1 14h15" strokeWidth="1.500" /> },
  ],
];
const StatusGroups = ({ list }: { list: Cell[][] }) => (
  <>
    {list.map((g, i) => (
      <StatusGroup key={i}>
        {g.map((c) => (
          <StatusButton key={c.n} aria-label={c.n} $w={c.w} $on={c.on} $sep={c.sep}>
            {c.t ?? (c.i === "caret" ? <Caret big c="#555" /> : <Ic>{c.i}</Ic>)}
          </StatusButton>
        ))}
      </StatusGroup>
    ))}
  </>
);

/* ---------- parts ---------- */
const menus = ["文件(F)", "编辑(E)", "视图(V)", "插入(I)", "格式(O)", "工具(T)", "绘图(D)", "标注(N)", "修改(M)", "参数(P)", "窗口(W)", "帮助(H)"];
const tabs = ["默认", "插入", "注释", "参数化", "三维工具", "可视化", "视图", "管理", "输出", "附加模块", "协作", "精选应用"];

const WindowGlyph = ({ kind }: { kind: "min" | "max" | "restore" | "close" }) => (
  <Ic s={14} c="#555" sw={kind === "close" ? 1.8 : 1.2}>
    {kind === "min" && <path d="M3 12h8" strokeWidth="2" />}
    {kind === "max" && <path d="M1.500 2.500h11v10h-11z" />}
    {kind === "restore" && <path d="M4.500 6V2.500h8v6H9M1.500 6.500h8v6h-8z" />}
    {kind === "close" && <path d="M2 2l10 10M12 2 2 12" />}
  </Ic>
);

const TitleBar = () => (
  <Header>
    <AppButton aria-label="应用程序菜单"><A s={28} /><Caret c="#222" /></AppButton>
    <HeaderRows>
      <TitleRow>
        <QuickBar>
          {quick.map(([n, i]) => <QuickButton key={n} aria-label={n}>{i}</QuickButton>)}
          <QuickButton aria-label="放弃"><Ic><path d={undoPath} fill="#eee" /></Ic></QuickButton>
          <QuickButton aria-label="放弃列表" $w={12}><Caret /></QuickButton>
          <QuickButton aria-label="重做"><Ic><path d={undoPath} fill="#eee" transform="matrix(-1 0 0 1 16 0)" /></Ic></QuickButton>
          <QuickButton aria-label="重做列表" $w={12}><Caret /></QuickButton>
          <Workspace>
            <Ic><circle cx="8" cy="8" r="5.500" /><circle cx="8" cy="8" r="2.500" /><circle cx="8" cy="8" r="6.800" strokeDasharray="2.400 2.900" strokeWidth="1.800" /></Ic>
            <PlainSelect aria-label="工作空间"><option>草图与注释</option></PlainSelect>
            <Caret big />
          </Workspace>
          <QuickButton aria-label="自定义快速访问工具栏" $w={16}><Ic s={8} c="#555"><path d="M0 .5h8" /><path d="M0 3h8L4 8z" fill="#555" stroke="none" /></Ic></QuickButton>
        </QuickBar>
        <Title><span>Autodesk AutoCAD 2020</span><span>Drawing1.dwg</span></Title>
        <InfoCenter>
          <Ic w={4} h={8}><path d="M0 0v8l4-4z" fill="#555" stroke="none" /></Ic>
          <SearchInput aria-label="搜索" placeholder="键入关键字或短语" />
          <QuickButton aria-label="查找"><Ic c="#27303d" sw={1.3}><path d="M3 2h3l1 3v9H1V9zM13 2h-3L9 5v9h6V9zM7 6h2M1 10h6M9 10h6" fill="#f4f4f4" /></Ic></QuickButton>
          <QuickButton aria-label="用户"><Ic c="#1d2f78"><path d="M4 5c0-6 8-6 8 0 0 3-2 4-2 6l5 2v2.500H1V13l5-2c0-2-2-3-2-6z" fill="#6f9df0" /></Ic></QuickButton>
          <QuickButton $w={77}>1753709273</QuickButton>
          <QuickButton aria-label="登录选项" $w={22}><Caret /></QuickButton>
          <QuickButton aria-label="应用商店" $w={22}><Ic c="#2a3a6e" sw={1.3}><path d="M0 1.500h3L5 10.500h9M4 4h12l-2 5H5" /><circle cx="6" cy="13.500" r="1.300" /><circle cx="13" cy="13.500" r="1.300" /></Ic></QuickButton>
          <QuickButton aria-label="Autodesk 360" $w={24}><Ic c="#2a3a6e" sw={1.2}><path d="M8 6 4.500 12h7zM5 4 1 11M11 4l4 7M4 14.500h8" /><circle cx="8" cy="3.500" r="2.500" /><circle cx="3" cy="12.500" r="2" /><circle cx="13" cy="12.500" r="2" /></Ic></QuickButton>
          <QuickButton aria-label="360 选项" $w={12}><Caret /></QuickButton>
          <Divider />
          <QuickButton aria-label="帮助" $w={34}><Ic s={18} c="#444"><circle cx="9" cy="9" r="8" fill="#f7f7f7" strokeWidth="1.300" /><text x="9" y="14" textAnchor="middle" fontSize="13" fontWeight="700" fill="#2351b5" stroke="none">?</text></Ic></QuickButton>
          <QuickButton aria-label="帮助选项" $w={8}><Caret /></QuickButton>
        </InfoCenter>
        <WindowControls>
          <QuickButton aria-label="最小化"><WindowGlyph kind="min" /></QuickButton>
          <QuickButton aria-label="最大化"><WindowGlyph kind="max" /></QuickButton>
          <QuickButton aria-label="关闭"><WindowGlyph kind="close" /></QuickButton>
        </WindowControls>
      </TitleRow>
      <MenuRow>
        {menus.map((m) => <MenuButton key={m}>{m}</MenuButton>)}
        <DocControls>
          <DocButton aria-label="最小化图形"><WindowGlyph kind="min" /></DocButton>
          <DocButton aria-label="还原图形"><WindowGlyph kind="restore" /></DocButton>
          <DocButton aria-label="关闭图形"><WindowGlyph kind="close" /></DocButton>
        </DocControls>
      </MenuRow>
    </HeaderRows>
  </Header>
);

const RibbonBar = () => (
  <Ribbon>
    <TabRow>
      {tabs.map((t) => <Tab key={t} $on={t === "插入"}>{t}</Tab>)}
      <TabToggle aria-label="最小化功能区"><Ic w={16} h={10} c="#444" sw={1.3}><path d="M3 1h10l2 2v4l-2 2H3L1 7V3z" fill="#eee" /><path d="M5 6.500h6L8 3z" fill="#444" stroke="none" /></Ic><Caret /></TabToggle>
    </TabRow>
    <Panels>
      <Panel $w={89}>
        <PanelBody $pad={4}>
          <BigButton $w={36} $hot $after={7}>{big.insert}<BigLabel>插入</BigLabel><Caret /></BigButton>
          <BigButton $w={40} $left>{big.editAttr}<SideLabel>{"编辑\n属性"}<Caret /></SideLabel></BigButton>
        </PanelBody>
        <PanelTitle>块<Caret big /></PanelTitle>
      </Panel>
      <Panel $w={197}>
        <PanelBody $pad={8}>
          <BigButton $w={44} $after={6}>{big.create}<BigLabel>创建块</BigLabel><Caret /></BigButton>
          <BigButton $w={56}>{big.define}<BigLabel>定义属性</BigLabel></BigButton>
          <BigButton $w={36}>{big.manage}<BigLabel>{"管理\n属性"}</BigLabel></BigButton>
          <BigButton $w={44}>{big.editor}<BigLabel>{"块\n编辑器"}</BigLabel></BigButton>
        </PanelBody>
        <PanelTitle>块定义<Caret big /></PanelTitle>
      </Panel>
      <Panel $w={303}>
        <PanelBody $pad={1}>
          <BigButton $w={38}>{big.attach}<BigLabel>附着</BigLabel></BigButton>
          <BigButton $w={38}>{big.clip}<BigLabel>剪裁</BigLabel></BigButton>
          <BigButton $w={38}>{big.adjust}<BigLabel>调整</BigLabel></BigButton>
          <SmallColumn>
            <SmallButton>{small.layers}参考底图图层</SmallButton>
            <SmallButton>{small.frame}*边框可变选项*<Caret /></SmallButton>
            <SmallButton>{small.snap}打开“捕捉到参考底图”功能<Caret /></SmallButton>
          </SmallColumn>
        </PanelBody>
        <PanelTitle><PanelName>参照<Caret big /></PanelName><Launcher aria-label="外部参照"><Ic s={7} c="#555"><path d="M1 1l5 5M6.500 2v4.500H2" /></Ic></Launcher></PanelTitle>
      </Panel>
      <Panel $w={212}>
        <PanelBody $pad={8}>
          <BigButton $w={42} $left>{big.pdf}<SideLabel>{"PDF\n输入"}<Caret /></SideLabel></BigButton>
          <PanelRule />
          <SmallColumn $w={106}>
            <SmallButton>{small.shx}识别 SHX 文字</SmallButton>
            <SmallButton>{small.shxSet}识别 设置</SmallButton>
          </SmallColumn>
          <BigButton $w={44}>{big.merge}<BigLabel>{"合并\n文字"}</BigLabel></BigButton>
        </PanelBody>
        <PanelTitle>输入</PanelTitle>
      </Panel>
      <Panel $w={125}>
        <PanelBody>
          <BigButton $w={41}>{big.field}<BigLabel>字段</BigLabel></BigButton>
          <SmallColumn>
            <SmallButton>{small.update}更新字段</SmallButton>
            <SmallButton>{small.ole}OLE 对象</SmallButton>
            <SmallButton>{small.link}超链接</SmallButton>
          </SmallColumn>
        </PanelBody>
        <PanelTitle>数据</PanelTitle>
      </Panel>
      <Panel $w={138}>
        <PanelBody>
          <BigButton $w={56}>{big.datalink}<BigLabel>数据链接</BigLabel></BigButton>
          <SmallColumn>
            <SmallButton>{small.down}从源下载</SmallButton>
            <SmallButton>{small.up}上载到源</SmallButton>
            <SmallButton>{small.extract}提取数据</SmallButton>
          </SmallColumn>
        </PanelBody>
        <PanelTitle>链接和提取</PanelTitle>
      </Panel>
      <Panel $w={70}>
        <PanelBody>
          <BigButton $w={69}>{big.globe}<BigLabel>设置位置</BigLabel><Caret /></BigButton>
        </PanelBody>
        <PanelTitle>位置</PanelTitle>
      </Panel>
    </Panels>
  </Ribbon>
);

const step = 122.85;
const ox = 437.5;
const oy = 697.5;
const Grid = () => (
  <Drawing width="1881" height="746">
    {Array.from({ length: 15 }, (_, k) => k - 3).map((k) => {
      const x = ox + k * step;
      return k !== 0 && <path key={k} d={`M${x} 0V746`} stroke={k % 5 === 0 ? "#9c9cab" : "#bcbcc4"} strokeWidth="1.400" />;
    })}
    {[1, 2, 3, 4, 5].map((k) => {
      const y = oy - k * step;
      return <path key={k} d={`M0 ${y}H1881`} stroke={k === 5 ? "#a0a1b0" : "#b8b9be"} strokeWidth="1.400" />;
    })}
    <path d={`M${ox} ${oy}V746`} stroke="#9a9ab4" />
    <path d={`M${ox} 0V${oy}`} stroke="#3f9840" />
    <path d={`M0 698H${ox}`} stroke="#bbbfc2" strokeWidth="2" />
    <path d={`M${ox} 698H1881`} stroke="#c39a9a" strokeWidth="2" />
    <g fill="none" stroke="#111">
      <path d="M437.500 647v50.500h51" />
      <path d="M433.500 692.500h9v9h-9z" />
      <path d="M439 630l6 6.500 6-6.500M445.500 636v7" />
      <path d="M492 683l13 13M505 683l-13 13" />
    </g>
    <path d="M621 476h1v1h-1zM634 462h1v1h-1z" fill="#000" />
  </Drawing>
);

const ViewCube = () => (
  <Compass>
    <svg width="138" height="140" fontFamily="Noto Sans CJK SC, sans-serif">
      <circle cx="69" cy="71" r="53.500" fill="none" stroke="#f8f8f8" strokeOpacity="0.700" strokeWidth="13" />
      <rect x="43.500" y="45.500" width="51" height="51" fill="#e9e9e9" fillOpacity="0.850" stroke="#a0a0a0" />
      <rect x="53" y="55" width="32" height="32" fill="#dcdee4" fillOpacity="0.800" />
      <text x="69" y="82" textAnchor="middle" fontSize="30" fontWeight="300" fill="#a3a5ab">上</text>
      <g fontSize="19" fill="#f6f6f6" stroke="#9c9c9c" strokeWidth="0.600" textAnchor="middle">
        <text x="69" y="23">北</text><text x="12" y="79">西</text><text x="126" y="79">东</text><text x="69" y="136">南</text>
      </g>
    </svg>
    <WcsButton>WCS<Ic w={9} h={6} c="#b5b5bb"><path d="M.5.5h8l-4 4.500z" /></Ic></WcsButton>
  </Compass>
);

const Navigation = () => (
  <NavBar>
    <Ic w={32} h={212} c="#d8d8d8" sw={1.1}>
      <circle cx="26" cy="5" r="3.500" fill="#dcdcdc" /><path d="M24.500 3.500l3 3M27.500 3.500l-3 3" stroke="#fff" />
      <path d="M16 19h11v11a11 11 0 1 1-11-11z" /><circle cx="16" cy="30" r="6" /><circle cx="16" cy="30" r="8" />
      <path d="M13 49h6l-3 3zM13 119h6l-3 3zM13 157h6l-3 3z" fill="#cfcfcf" stroke="none" />
      <path d="M3 56.500h26M3 164.500h26" stroke="#c8c8c8" />
      <path d="M11 83c-2-5-7-7-6-10 2-2 4 1 5 2L8 65c0-3 3-3 3 0l2 7V62c0-3 3-3 3 0l1 10 2-9c1-3 3-2 3 1l-1 9 3-6c2-2 3-1 3 1-2 6-3 11-5 15z" />
      <path d="M5 91l14 14M19 91 5 105M4 95v-5h5M15 90h5v5M4 101v5h5" /><circle cx="20" cy="105" r="5" fill="#f5f5f5" /><path d="M24 109l4 4" strokeWidth="3" />
      <path d="M14 149v-16h-3l5-6 5 6h-3v16zM14 146c-14-2-14-10 2-10 15 0 15 8 5 10M9 140l-3 4 5 3" />
      <path d="M4.500 170.500h5v5h-5zM12.500 170.500h5v5h-5zM20.500 170.500h5v5h-5zM4.500 179.500h15v12h-15z" /><path d="M9 182v7l6-3.500z" fill="#cfcfcf" />
      <circle cx="26" cy="206" r="3.500" fill="#dcdcdc" /><path d="M24 205h4M24 207h4" stroke="#fff" />
    </Ic>
  </NavBar>
);

const Desktop = () => (
  <Taskbar>
    <TaskButton $w={48} aria-label="开始"><Ic c="none"><path d="M0 2.500 6.500 1.500v6H0zM7.500 1.300 16 0v7.500H7.500zM0 8.500h6.500v6L0 13.500zM7.500 8.500H16V16l-8.500-1.200z" fill="#fff" /></Ic></TaskButton>
    <TaskButton $w={48} aria-label="搜索"><Ic s={18} c="#fff" sw={1.4}><circle cx="11" cy="7" r="5.500" /><path d="M7 11l-6 6" /></Ic></TaskButton>
    <TaskButton $w={48} aria-label="Cortana"><Ic s={18} c="#fff" sw={2}><circle cx="9" cy="9" r="7" /></Ic></TaskButton>
    <TaskButton $w={48} aria-label="任务视图"><Ic s={16} c="#fff" sw={1.3}><path d="M1 0v2.500h9V0M1 16v-2.500h9V16M1 5h9v6H1zM14 0v4M14 8v8M12.500 6h3" /></Ic></TaskButton>
    <TaskButton $w={52} aria-label="应用中心"><Ic s={22} c="#22373f" sw={1.2}>{[0, 72, 144, 216, 288].map((r) => <path key={r} transform={`rotate(${r} 11 11)`} d="M11 11C4 10 4 1 11 .5c7 0 6 7 1 7 2 1 1 3-1 3.500z" fill="#fff" />)}</Ic></TaskButton>
    <WebSearch>
      <WebLabel>
        <Ic s={18} c="#2a94e8" sw={3}><path d="M15 12c-3 6-12 4-11-3 1-8 12-7 11 1H5" /><path d="M2 15C-1 12 9 0 16 2" stroke="#6fc3f5" strokeWidth="1.500" /></Ic>
        <Ic w={6} h={5}><path d="M0 5h6L3 0z" fill="#999" stroke="none" /></Ic>
        <WebInput aria-label="网页搜索" defaultValue="易建联致敬科比" />
      </WebLabel>
      <WebButton type="button">搜索一下</WebButton>
    </WebSearch>
    <TaskButton $w={50} aria-label="360 浏览器"><Ic s={22}><circle cx="11" cy="11" r="10" fill="#5fbf2a" stroke="#fff" strokeWidth="1.500" /><path d="M16 14c-3 5-10 3-10-3s10-7 10 0H7" stroke="#fff" strokeWidth="2.600" /><path d="M2 21C-2 14 10 0 20 1" stroke="#3d9a1a" strokeWidth="1.500" /></Ic></TaskButton>
    <TaskButton $w={48} $run aria-label="Edge"><Ic s={22}><path d="M1 10C3-2 20-3 21 10v3H8c0 6 8 6 12 3v4C11 25 3 19 4 12c1-3 3-4 5-5C6 6 2 8 1 10zm7-1h7c0-5-6-5-7 0z" fill="#0f7bdc" stroke="none" /></Ic></TaskButton>
    <TaskButton $w={50} $run aria-label="WPS"><Ic s={22}><rect width="22" height="22" rx="3" fill="#2f7df6" stroke="none" /><path d="M4 6.500h4l2 8 3-8h5l-4 9-3-7-3 7z" stroke="#fff" strokeWidth="1.600" /></Ic></TaskButton>
    <TaskButton $w={48} $run aria-label="记事本"><Ic s={22}><path d="M7 1h13l-3 19L0 17z" fill="#7cc4d4" stroke="none" /><path d="M7 1h13l-1 5L5 4z" fill="#d8eef2" stroke="none" /><path d="M20 2l1 16-4 3z" fill="#e6e0cc" stroke="none" /></Ic></TaskButton>
    <TaskButton $w={48} $run $on aria-label="AutoCAD"><Ic s={24}><path d="M0 0h24v24H0z" fill="#fbe9e4" stroke="none" /><path d="M4 21 10 3h5l6 18h-4l-2-5h-5l-2 5zM11 12h3l-1.500-5z" fill="#b8222b" stroke="none" /></Ic></TaskButton>
    <TaskButton $w={50} $run aria-label="看图"><Ic s={24}><circle cx="12" cy="12" r="12" fill="#4a4f3f" stroke="none" /><path d="M3 8 8 3l3 3 6-3 3 6 1 7-7 7H7l-4-6z" fill="#dcb0a6" stroke="none" /><circle cx="14" cy="12" r="3" fill="#cb8684" stroke="none" /><path d="M9 9h1.500M17 8h1.500" stroke="#333" strokeWidth="1.500" /></Ic></TaskButton>
    <Tray>
      <TaskButton $w={24} aria-label="显示隐藏图标"><Ic w={12} h={8} c="#fff" sw={1.3}><path d="M1 7l5-5 5 5" /></Ic></TaskButton>
      <TaskButton $w={24} aria-label="网络"><Ic c="#fff" sw={1.2}><path d="M5 3.500h10.500v7H3.500V7M.5 1.500h4v4h-4zM9.500 11v3M6 14.500h7" /></Ic></TaskButton>
      <TaskButton $w={23} aria-label="音量"><Ic c="#fff" sw={1.2}><path d="M1 5.500h2.500l4-4v12l-4-4H1z" /><circle cx="12" cy="11" r="4" fill="#dc2f35" stroke="none" /><path d="M10.500 9.500l3 3M13.500 9.500l-3 3" /></Ic></TaskButton>
      <TaskButton $w={28}>英</TaskButton>
      <TaskButton $w={28} aria-label="QQ 浏览器"><Ic><rect width="16" height="16" rx="3" fill="#2b8cf5" stroke="none" /><circle cx="8" cy="7.500" r="4" stroke="#fff" strokeWidth="2" /><circle cx="13" cy="13" r="1.500" fill="#a7e13c" stroke="none" /></Ic></TaskButton>
      <Clock>{"15:53 周五\n2020/11/13"}</Clock>
      <TaskButton $w={66} aria-label="通知"><Ic w={28} h={30}><path d="M5 3h15v12H12l-3 4v-4H5z" fill="#fff" stroke="none" /><path d="M8 7h9M8 10h9" stroke="#1b2a42" /><circle cx="20" cy="21" r="7.500" fill="#2a2f38" stroke="#8a8f98" /><text x="20" y="26" textAnchor="middle" fontSize="13" fill="#fff" stroke="none">1</text></Ic></TaskButton>
    </Tray>
  </Taskbar>
);

export default function App() {
  return (
    <Shell>
      <GlobalStyle />
      <TopStrip />
      <TitleBar />
      <RibbonBar />
      <Work>
        <ToolPalette>
          <Grip />
          {tools.map(([n, i]) => <ToolButton key={n} aria-label={n}><Ic>{i}</Ic></ToolButton>)}
        </ToolPalette>
        <Canvas><Grid /><ViewCube /><Navigation /></Canvas>
      </Work>
      <Command>
        <CommandTools>
          <Grip />
          <Ic s={10} c="#555" sw={2}><path d="M1 1l8 8M9 1 1 9" /></Ic>
          <Ic s={16} c="#666" sw={1.2}><path d="M1 13 9 6C8 2 11 0 14 1l-3 3 1 1 3-3c1 4-2 6-5 5l-7 8c-2 1-3-1-2-2z" fill="#eee" /></Ic>
        </CommandTools>
        <CommandBody>
          <History>{"命令: _.undo 当前设置: 自动 = 开, 控制 = 全部, 合并 = 是, 图层 = 是\n输入要放弃的操作数目或 [自动(A)/控制(C)/开始(BE)/结束(E)/标记(M)/后退(B)] <1>: 1 SPLINE GROUP"}</History>
          <Prompt>
            <Ic w={16} h={12}><path d="M.5.5h15v11H.5zM3 4l3 2-3 2M8 8.500h4" fill="#f2f2f2" /></Ic>
            <Caret big />
            <PromptInput aria-label="命令行" placeholder="键入命令" />
          </Prompt>
        </CommandBody>
      </Command>
      <Bottom>
        <LayoutTabs>
          <LayoutTab $on>模型</LayoutTab>
          <LayoutTab $w={52}>布局1</LayoutTab>
          <LayoutTab $w={52}>布局2</LayoutTab>
          <LayoutTab $w={28} aria-label="新建布局">+</LayoutTab>
        </LayoutTabs>
        <Status>
          <StatusGroup><Coordinates>-25.7307, 55.9752, 0.0000</Coordinates></StatusGroup>
          <StatusGroups list={groups1} />
          <StatusGroup>
            <StatusButton $w={24} aria-label="单位"><Ic><path d="M5 0h8v2h-4v2h3v1H9v3h4v1H9v3h3v1H9v1h4v2H5z" fill="#444" stroke="none" /></Ic></StatusButton>
            <UnitSelect><PlainSelect aria-label="图形单位"><option>小数</option></PlainSelect><Caret big c="#555" /></UnitSelect>
            <StatusButton $w={25} $sep aria-label="快捷特性"><Ic><path d="M2.500.5h12v15h-12zM5 3.500h1M8 3.500h5M5 6.500h1M8 6.500h5M5 9.500h1M8 9.500h5M5 12.500h1M8 12.500h5" /></Ic></StatusButton>
          </StatusGroup>
          <StatusGroups list={groups2} />
        </Status>
      </Bottom>
      <Desktop />

      <Gauge />
      <Tooltip>
        <TipTitle>插入块</TipTitle>
        <TipLead>将块或图形插入到当前图形中</TipLead>
        <TipBody>建议插入块库中的块。块库可以是存储相关块定义的图形文件，也可以是包含相关图形文件的文件夹，每个文件均可作为块插入。无论使用何种方法，块均可标准化且可供多个用户访问。</TipBody>
        <TipCommand>
          <Ic><path d="M0 0h14v15H0z" fill="#f7f3a0" stroke="#999" /><path d="M0 0h14v2H0z" fill="#1830a0" stroke="none" /><path d="M3 9h13v7H3z" fill="#111" stroke="none" /><path d="M5 12.500h3M9 12.500h4" stroke="#ccc" /></Ic>
          INSERT
        </TipCommand>
        <TipTitle as="p">按 F1 键获得更多帮助</TipTitle>
      </Tooltip>
      <Frame $x={53} $y={46} $w={48} $h={32} />
      <Frame $x={11} $y={76} $w={45} $h={79} />
      <Frame $x={15} $y={162} $w={383} $h={188} />
      <Pointer width="36" height="36"><path d="M1 34 6 12l4 4L34 2 17 22l6 4z" fill={mark} /></Pointer>
      <Mascot width="50" height="50" viewBox="0 0 50 50">
        <circle cx="25" cy="25" r="24" fill="#e8ebef" stroke="#2f8cf5" strokeWidth="2" />
        <path d="M8 34C8 3 42 3 42 34z" fill="#c9ced8" /><path d="M6 34c10 4 28 4 38 0l-3 8c-8 3-24 3-32 0z" fill="#aeb6c2" /><path d="M14 41h6v6l-6-3z" fill="#aeb6c2" />
        <ellipse cx="21" cy="21" rx="3.500" ry="4.500" fill="#fff" /><ellipse cx="29" cy="21" rx="3.500" ry="4.500" fill="#fff" /><circle cx="22" cy="21" r="1.300" fill="#555" /><path d="M27 21h3" stroke="#555" /><ellipse cx="25" cy="30" rx="11" ry="2.500" fill="#fff" />
      </Mascot>
      <Activation><ActivationTitle>激活 Windows</ActivationTitle>转到“设置”以激活 Windows。</Activation>
      <Watermark>最需教育</Watermark>
    </Shell>
  );
}
